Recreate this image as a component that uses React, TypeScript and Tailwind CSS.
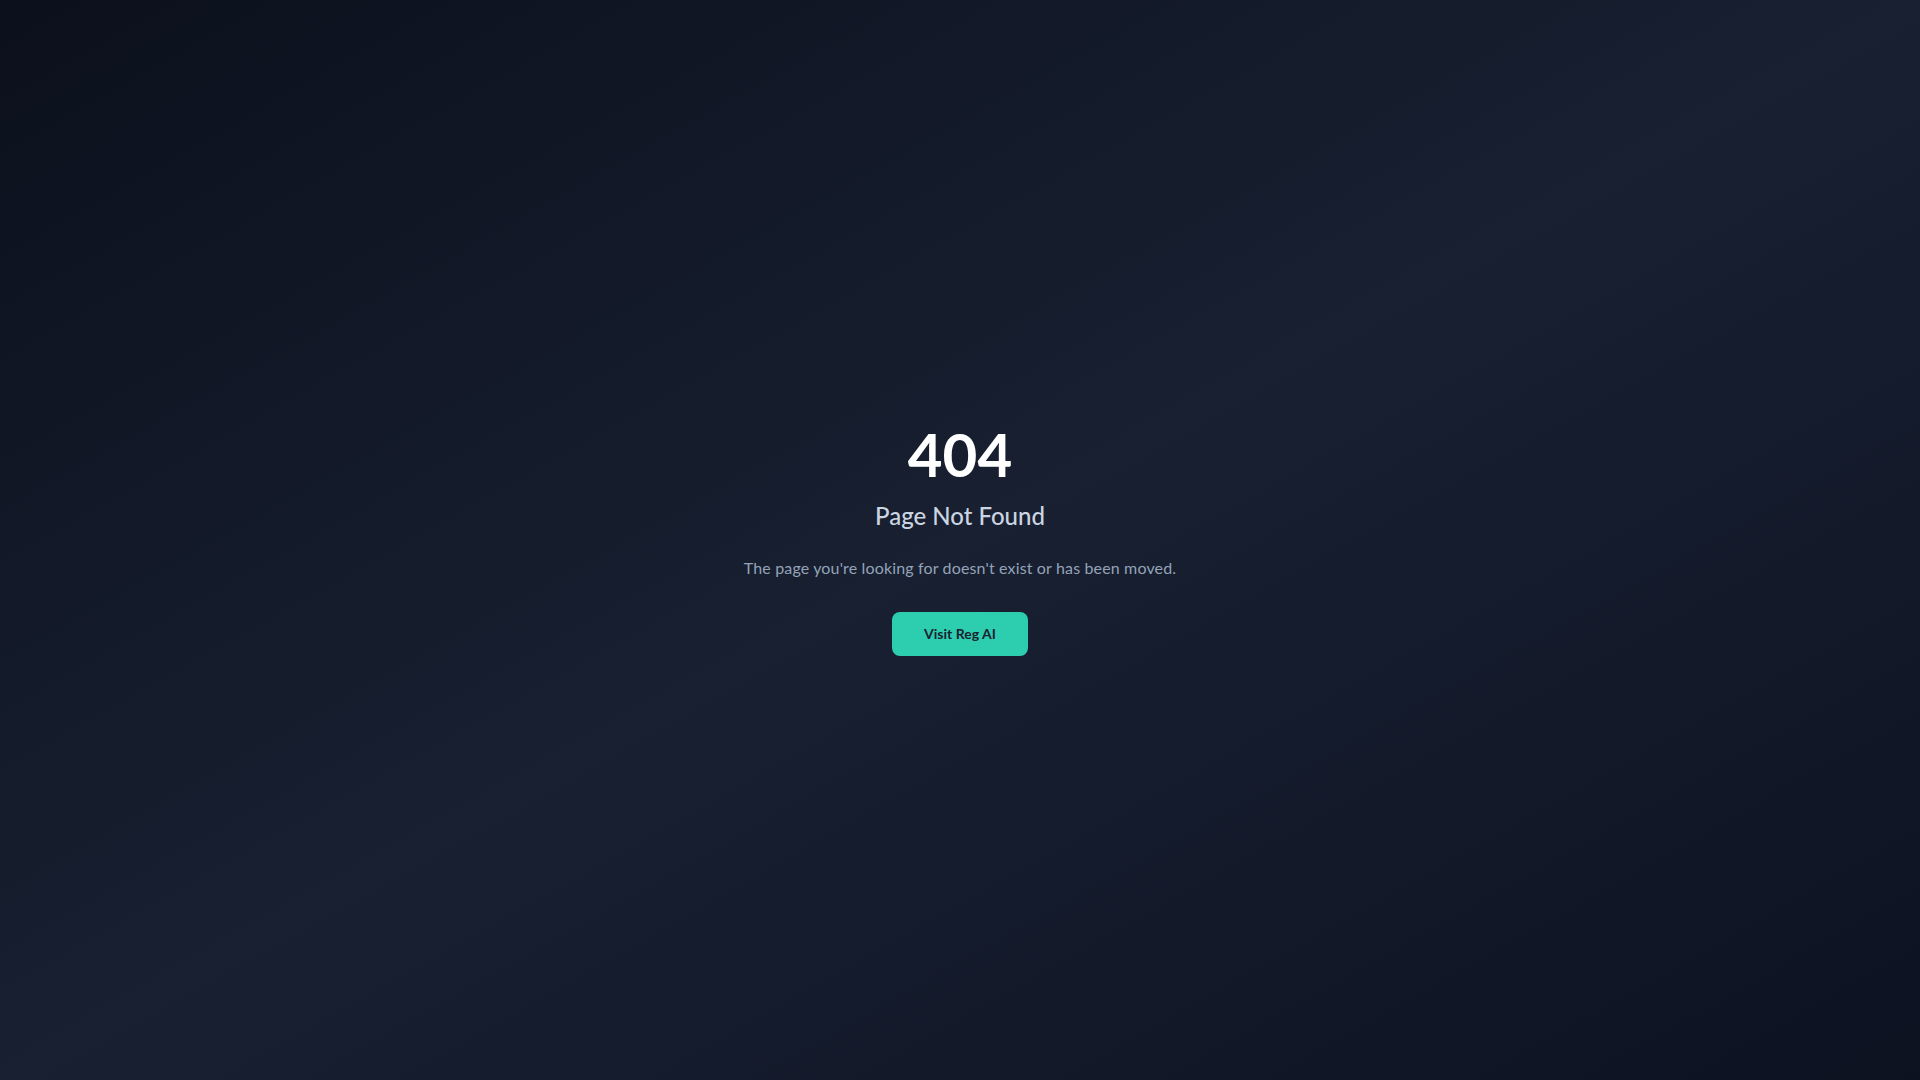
export default function App() {
  return (
    <div
      className="min-h-screen w-full flex items-center justify-center bg-gradient-to-br from-[#0b101c] via-[#182031] to-[#0d1221]"
      style={{ fontFamily: '"Lato", "Noto Sans", sans-serif' }}
    >
      <div className="flex flex-col items-center text-center">
        <h1 className="text-6xl font-bold leading-none text-white mb-4">404</h1>
        <h2 className="text-2xl font-medium text-[#cbd5e1] mb-6">Page Not Found</h2>
        <p className="text-base tracking-[0.15px] text-[#94a3b8]">
          The page you're looking for doesn't exist or has been moved.
        </p>
        <button className="mt-8 px-8 py-3 rounded-lg bg-[#2dcdaf] text-sm font-bold text-[#1a2332]">
          Visit Reg AI
        </button>
      </div>
    </div>
  );
}
